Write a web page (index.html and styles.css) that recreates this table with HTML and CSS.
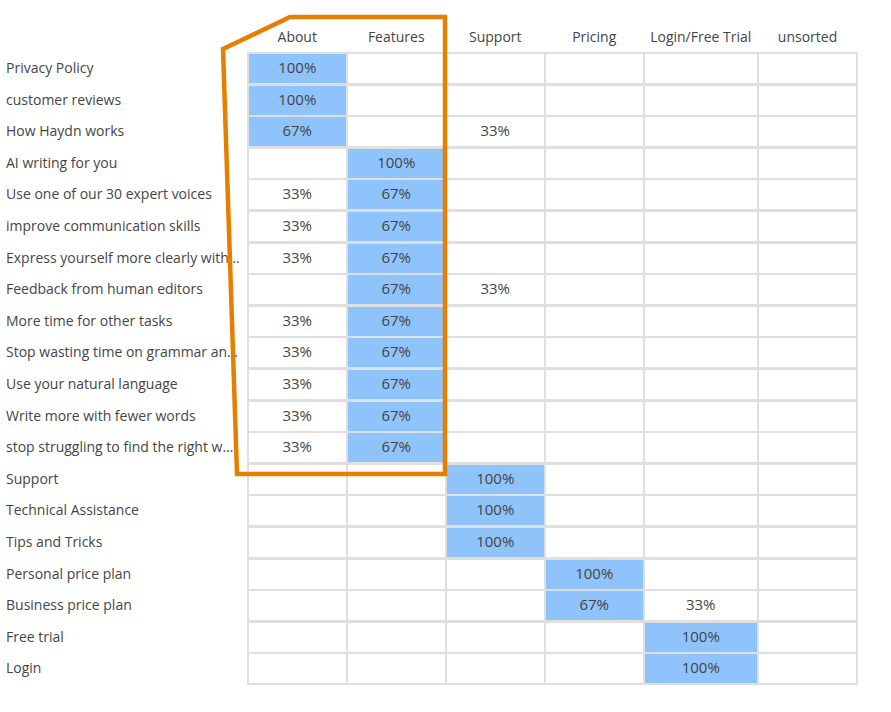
FILE: index.html
```html
<!DOCTYPE html>
<html>
<head>
<meta charset="utf-8">
<link rel="stylesheet" href="styles.css">
</head>
<body>
<div class="page">
  <div class="labels">
    <div class="label">Privacy Policy</div>
    <div class="label">customer reviews</div>
    <div class="label">How Haydn works</div>
    <div class="label">AI writing for you</div>
    <div class="label">Use one of our 30 expert voices</div>
    <div class="label">improve communication skills</div>
    <div class="label">Express yourself more clearly with Haydn</div>
    <div class="label">Feedback from human editors</div>
    <div class="label">More time for other tasks</div>
    <div class="label">Stop wasting time on grammar and spelling</div>
    <div class="label">Use your natural language</div>
    <div class="label">Write more with fewer words</div>
    <div class="label">stop struggling to find the right words</div>
    <div class="label">Support</div>
    <div class="label">Technical Assistance</div>
    <div class="label">Tips and Tricks</div>
    <div class="label">Personal price plan</div>
    <div class="label">Business price plan</div>
    <div class="label">Free trial</div>
    <div class="label">Login</div>
  </div>
  <div class="matrix">
    <div class="heads">
      <div class="head">About</div>
      <div class="head">Features</div>
      <div class="head">Support</div>
      <div class="head">Pricing</div>
      <div class="head">Login/Free Trial</div>
      <div class="head">unsorted</div>
    </div>
    <div class="grid">
      <div class="cell hit">100%</div><div class="cell"></div><div class="cell"></div><div class="cell"></div><div class="cell"></div><div class="cell"></div>
      <div class="cell hit">100%</div><div class="cell"></div><div class="cell"></div><div class="cell"></div><div class="cell"></div><div class="cell"></div>
      <div class="cell hit">67%</div><div class="cell"></div><div class="cell">33%</div><div class="cell"></div><div class="cell"></div><div class="cell"></div>
      <div class="cell"></div><div class="cell hit">100%</div><div class="cell"></div><div class="cell"></div><div class="cell"></div><div class="cell"></div>
      <div class="cell">33%</div><div class="cell hit">67%</div><div class="cell"></div><div class="cell"></div><div class="cell"></div><div class="cell"></div>
      <div class="cell">33%</div><div class="cell hit">67%</div><div class="cell"></div><div class="cell"></div><div class="cell"></div><div class="cell"></div>
      <div class="cell">33%</div><div class="cell hit">67%</div><div class="cell"></div><div class="cell"></div><div class="cell"></div><div class="cell"></div>
      <div class="cell"></div><div class="cell hit">67%</div><div class="cell">33%</div><div class="cell"></div><div class="cell"></div><div class="cell"></div>
      <div class="cell">33%</div><div class="cell hit">67%</div><div class="cell"></div><div class="cell"></div><div class="cell"></div><div class="cell"></div>
      <div class="cell">33%</div><div class="cell hit">67%</div><div class="cell"></div><div class="cell"></div><div class="cell"></div><div class="cell"></div>
      <div class="cell">33%</div><div class="cell hit">67%</div><div class="cell"></div><div class="cell"></div><div class="cell"></div><div class="cell"></div>
      <div class="cell">33%</div><div class="cell hit">67%</div><div class="cell"></div><div class="cell"></div><div class="cell"></div><div class="cell"></div>
      <div class="cell">33%</div><div class="cell hit">67%</div><div class="cell"></div><div class="cell"></div><div class="cell"></div><div class="cell"></div>
      <div class="cell"></div><div class="cell"></div><div class="cell hit">100%</div><div class="cell"></div><div class="cell"></div><div class="cell"></div>
      <div class="cell"></div><div class="cell"></div><div class="cell hit">100%</div><div class="cell"></div><div class="cell"></div><div class="cell"></div>
      <div class="cell"></div><div class="cell"></div><div class="cell hit">100%</div><div class="cell"></div><div class="cell"></div><div class="cell"></div>
      <div class="cell"></div><div class="cell"></div><div class="cell"></div><div class="cell hit">100%</div><div class="cell"></div><div class="cell"></div>
      <div class="cell"></div><div class="cell"></div><div class="cell"></div><div class="cell hit">67%</div><div class="cell">33%</div><div class="cell"></div>
      <div class="cell"></div><div class="cell"></div><div class="cell"></div><div class="cell"></div><div class="cell hit">100%</div><div class="cell"></div>
      <div class="cell"></div><div class="cell"></div><div class="cell"></div><div class="cell"></div><div class="cell hit">100%</div><div class="cell"></div>
    </div>
  </div>
  <svg class="highlight" width="891" height="712" viewBox="0 0 891 712">
    <polygon points="223,49 290,17 445,17 445,474 237,474" fill="none" stroke="#e67f00" stroke-width="4.5" stroke-linejoin="miter"/>
  </svg>
</div>
</body>
</html>
```
FILE: styles.css
```css
html, body {
  margin: 0;
  padding: 0;
  background: #ffffff;
}

body {
  font-family: "Open Sans", "Liberation Sans", sans-serif;
  font-size: 14px;
  color: #454545;
}

.page {
  position: relative;
  display: flex;
  width: 891px;
  height: 712px;
}

.labels {
  flex: 0 0 247px;
  width: 247px;
  padding-top: 54px;
  display: grid;
  grid-auto-rows: 29.1px;
  row-gap: 2.5px;
  align-content: start;
}

.label {
  padding-left: 6px;
  width: 234px;
  overflow: hidden;
  white-space: nowrap;
  text-overflow: ellipsis;
  line-height: 28px;
}

.matrix {
  display: flex;
  flex-direction: column;
  padding-top: 25px;
}

.heads {
  display: grid;
  grid-template-columns: 96.5px 96.5px 96.5px 96.5px 111.5px 97px;
  column-gap: 2.5px;
  padding: 0 2px;
  height: 27px;
}

.head {
  text-align: center;
  line-height: 24px;
}

.grid {
  display: grid;
  grid-template-columns: 96.5px 96.5px 96.5px 96.5px 111.5px 97px;
  grid-auto-rows: 29.1px;
  gap: 2.5px;
  padding: 2px;
  background: #dfdfdf;
}

.cell {
  background: #ffffff;
  display: flex;
  align-items: center;
  justify-content: center;
  font-size: 15px;
  padding-bottom: 3px;
  box-sizing: border-box;
}

.cell.hit {
  background: #8fc3fb;
}

.highlight {
  position: absolute;
  left: 0;
  top: 0;
  pointer-events: none;
}
```
